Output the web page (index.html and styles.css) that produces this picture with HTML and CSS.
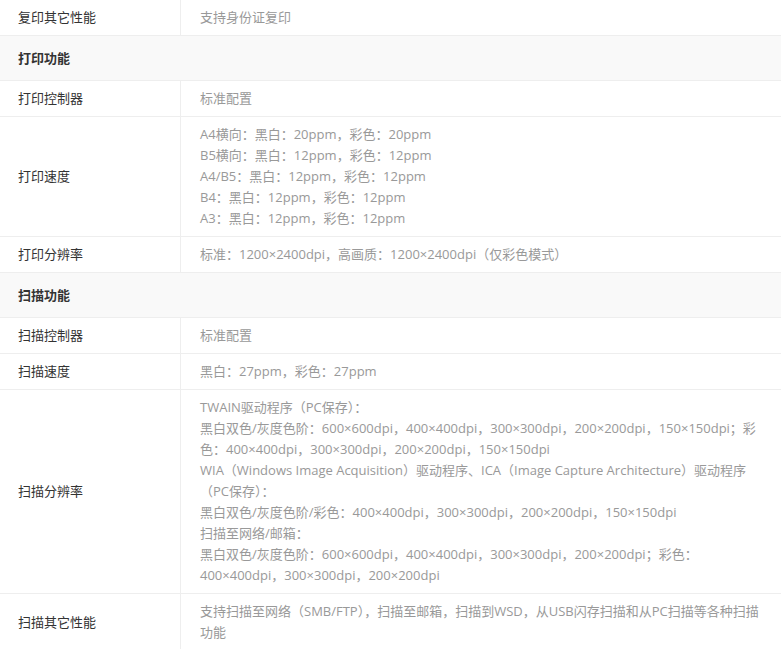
FILE: index.html
```html
<!DOCTYPE html>
<html lang="zh-CN">
<head>
<meta charset="utf-8">
<title>规格参数</title>
<link rel="stylesheet" href="styles.css">
</head>
<body>
<table class="spec">
  <tbody>
    <tr>
      <td class="spec-label">复印其它性能</td>
      <td class="spec-value">支持身份证复印</td>
    </tr>
    <tr class="spec-group">
      <th colspan="2">打印功能</th>
    </tr>
    <tr>
      <td class="spec-label">打印控制器</td>
      <td class="spec-value">标准配置</td>
    </tr>
    <tr>
      <td class="spec-label">打印速度</td>
      <td class="spec-value">A4横向：黑白：20ppm，彩色：20ppm<br>B5横向：黑白：12ppm，彩色：12ppm<br>A4/B5：黑白：12ppm，彩色：12ppm<br>B4：黑白：12ppm，彩色：12ppm<br>A3：黑白：12ppm，彩色：12ppm</td>
    </tr>
    <tr>
      <td class="spec-label">打印分辨率</td>
      <td class="spec-value">标准：1200×2400dpi，高画质：1200×2400dpi（仅彩色模式）</td>
    </tr>
    <tr class="spec-group">
      <th colspan="2">扫描功能</th>
    </tr>
    <tr>
      <td class="spec-label">扫描控制器</td>
      <td class="spec-value">标准配置</td>
    </tr>
    <tr>
      <td class="spec-label">扫描速度</td>
      <td class="spec-value">黑白：27ppm，彩色：27ppm</td>
    </tr>
    <tr>
      <td class="spec-label">扫描分辨率</td>
      <td class="spec-value">TWAIN驱动程序（PC保存）：<br>黑白双色/灰度色阶：600×600dpi，400×400dpi，300×300dpi，200×200dpi，150×150dpi；彩色：400×400dpi，300×300dpi，200×200dpi，150×150dpi<br>WIA（Windows Image Acquisition）驱动程序、ICA（Image Capture Architecture）驱动程序（PC保存）：<br>黑白双色/灰度色阶/彩色：400×400dpi，300×300dpi，200×200dpi，150×150dpi<br>扫描至网络/邮箱：<br>黑白双色/灰度色阶：600×600dpi，400×400dpi，300×300dpi，200×200dpi；彩色：400×400dpi，300×300dpi，200×200dpi</td>
    </tr>
    <tr>
      <td class="spec-label">扫描其它性能</td>
      <td class="spec-value">支持扫描至网络（SMB/FTP），扫描至邮箱，扫描到WSD，从USB闪存扫描和从PC扫描等各种扫描功能</td>
    </tr>
  </tbody>
</table>
</body>
</html>
```

FILE: styles.css
```css
html, body {
  margin: 0;
  padding: 0;
  background: #fff;
}

body {
  font-family: "Open Sans", "Noto Sans CJK SC", sans-serif;
  font-size: 13px;
  line-height: 21px;
  color: #333;
}

.spec {
  width: 781px;
  border-collapse: collapse;
  table-layout: fixed;
}

.spec td,
.spec th {
  border-top: 1px solid #eeeeee;
  vertical-align: middle;
  text-align: left;
}

.spec tr:first-child td {
  border-top: none;
}

.spec-label {
  width: 162px;
  padding: 7px 0 7px 18px;
  color: #333;
  border-right: 1px solid #eeeeee;
}

.spec-value {
  padding: 7px 18px 7px 19px;
  color: #999;
}

.spec-group th {
  background: #f9f9f9;
  font-weight: bold;
  color: #333;
  padding: 12px 18px 11px;
}
```
